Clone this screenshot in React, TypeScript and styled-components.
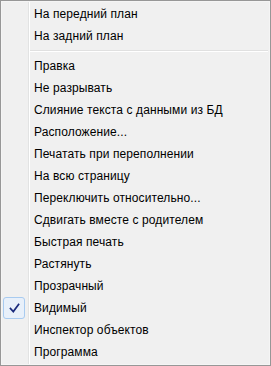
import React from 'react'
import styled, { createGlobalStyle } from 'styled-components'

const GlobalStyle = createGlobalStyle`
  html, body {
    margin: 0;
    padding: 0;
    background: #ffffff;
  }
`

type Entry = { label: string; checked?: boolean } | { separator: true }

const entries: Entry[] = [
  { label: 'На передний план' },
  { label: 'На задний план' },
  { separator: true },
  { label: 'Правка' },
  { label: 'Не разрывать' },
  { label: 'Слияние текста с данными из БД' },
  { label: 'Расположение...' },
  { label: 'Печатать при переполнении' },
  { label: 'На всю страницу' },
  { label: 'Переключить относительно...' },
  { label: 'Сдвигать вместе с родителем' },
  { label: 'Быстрая печать' },
  { label: 'Растянуть' },
  { label: 'Прозрачный' },
  { label: 'Видимый', checked: true },
  { label: 'Инспектор объектов' },
  { label: 'Программа' },
]

function CheckMark() {
  return (
    <svg width="11" height="11" viewBox="0 0 11 11">
      <path
        d="M1.5 5.5 L4.3 8.6 L9.6 1.4"
        fill="none"
        stroke="#1a2a7c"
        strokeWidth="1.7"
        strokeLinecap="square"
      />
    </svg>
  )
}

function App() {
  return (
    <>
      <GlobalStyle />
      <Menu>
        {entries.map((entry, i) =>
          'separator' in entry ? (
            <Separator key={i} />
          ) : (
            <Item key={i}>
              <IconCell $checked={!!entry.checked}>
                {entry.checked && <CheckMark />}
              </IconCell>
              <Label>{entry.label}</Label>
            </Item>
          )
        )}
      </Menu>
    </>
  )
}

export default App

const Menu = styled.div`
  box-sizing: border-box;
  width: 271px;
  height: 366px;
  padding: 2px;
  border: 1px solid #979797;
  box-shadow: inset 0 0 0 1px #f5f5f5;
  background:
    linear-gradient(
      to right,
      transparent 27px,
      #e2e3e3 27px,
      #e2e3e3 28px,
      #ffffff 28px,
      #ffffff 29px,
      transparent 29px
    ),
    #f0f0f0;
  display: flex;
  flex-direction: column;
  font-family: 'Liberation Sans', Arial, sans-serif;
  font-size: 12px;
  letter-spacing: 0.1px;
  color: #000000;
`

const Item = styled.div`
  height: 22px;
  display: grid;
  grid-template-columns: 22px 1fr;
  column-gap: 9px;
  align-items: center;
`

const IconCell = styled.div<{ $checked: boolean }>`
  box-sizing: border-box;
  height: 22px;
  display: flex;
  align-items: center;
  justify-content: center;
  border-radius: 3px;
  border: 1px solid ${({ $checked }) => ($checked ? '#a8cbf0' : 'transparent')};
  background: ${({ $checked }) => ($checked ? '#e8f0fa' : 'transparent')};
`

const Label = styled.span`
  white-space: nowrap;
  line-height: 22px;
`

const Separator = styled.div`
  height: 8px;
  margin-left: 27px;
  display: flex;
  align-items: center;

  &::after {
    content: '';
    flex: 1;
    height: 1px;
    border-bottom: 1px solid #ffffff;
    background: #e0e0e0;
  }
`
